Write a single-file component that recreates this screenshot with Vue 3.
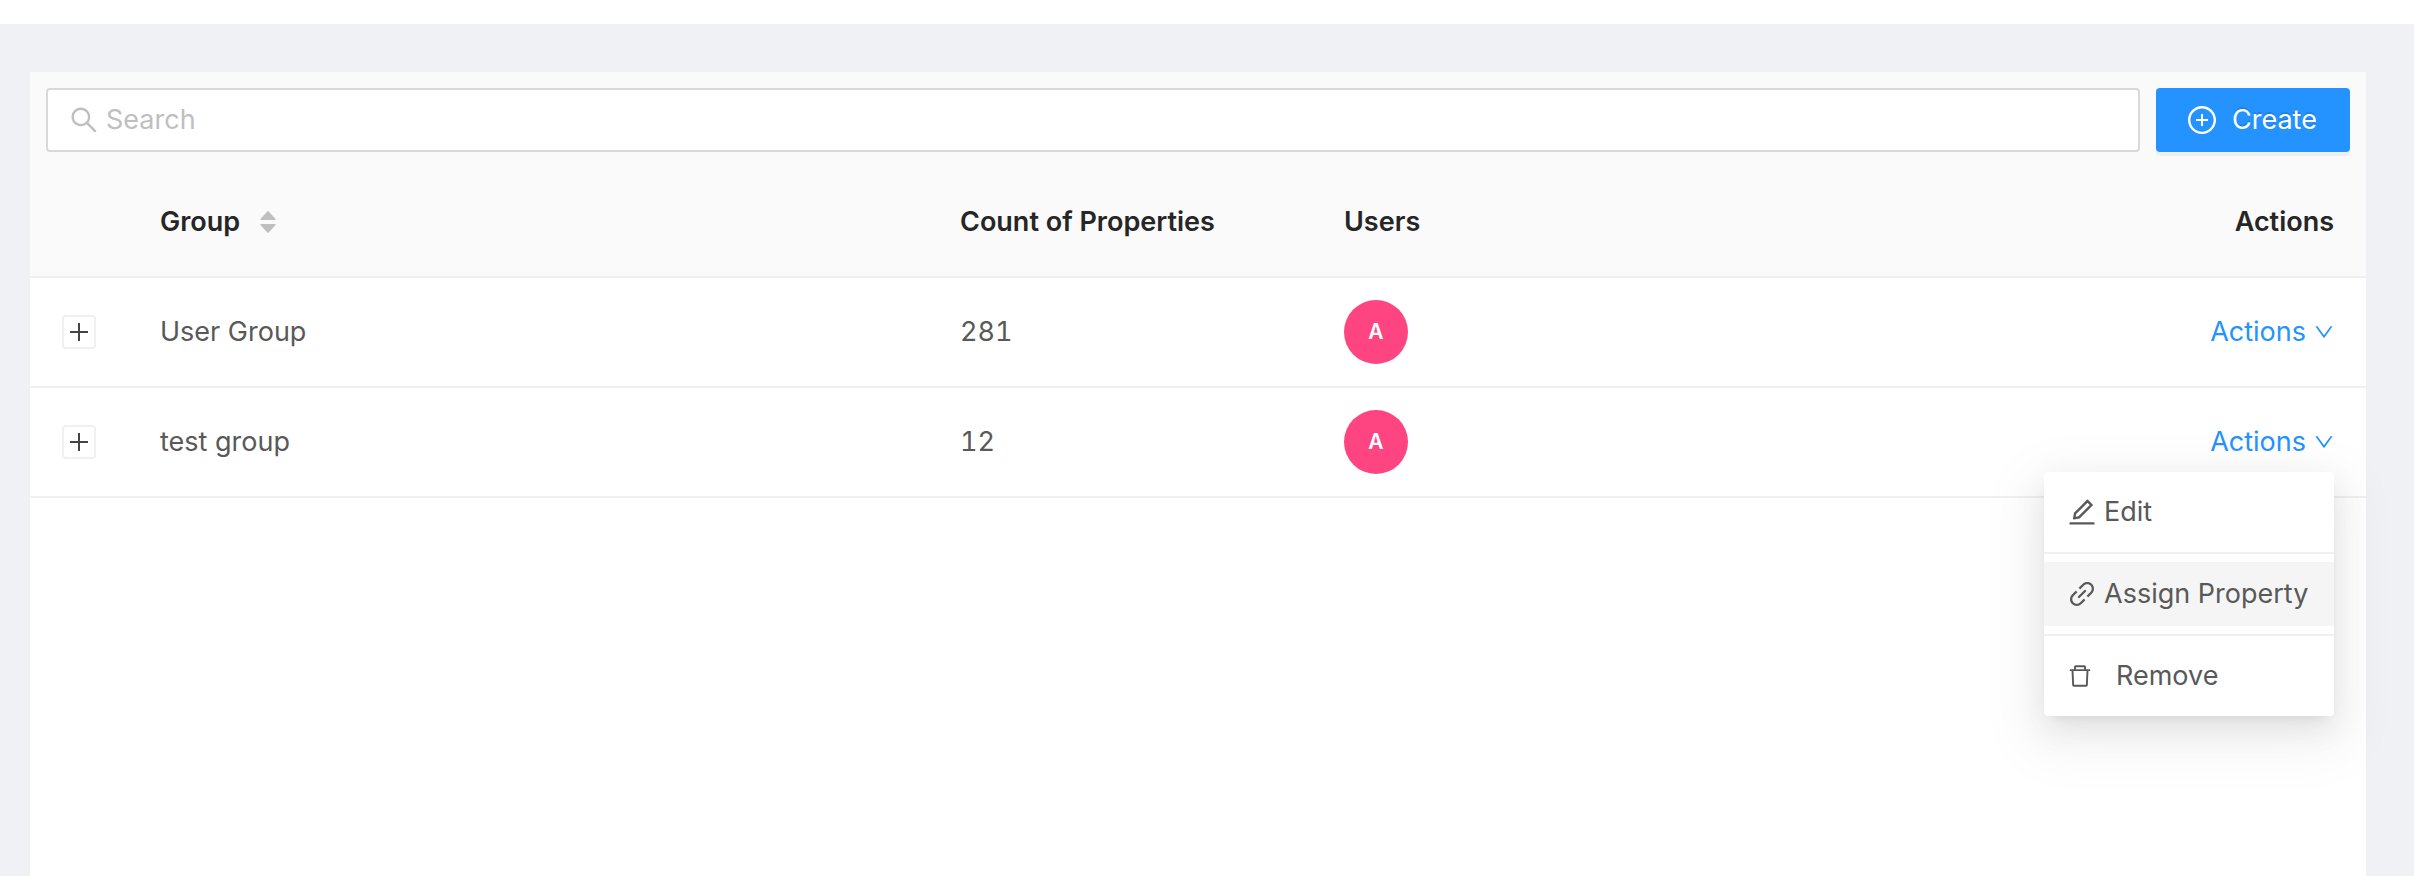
<script setup>
import { ref } from 'vue'

const query = ref('')
const openRow = ref(2)

const rows = [
  { id: 1, name: 'User Group', count: 281, user: 'A' },
  { id: 2, name: 'test group', count: 12, user: 'A' },
]

const icons = {
  search: 'M909.6 854.5L649.9 594.8C690.2 542.7 712 479 712 412c0-80.2-31.3-155.4-87.9-212.1-56.6-56.7-132-87.9-212.1-87.9s-155.5 31.3-212.1 87.9C143.2 256.5 112 331.8 112 412c0 80.1 31.3 155.5 87.9 212.1C256.5 680.8 331.8 712 412 712c67 0 130.6-21.8 182.7-62l259.7 259.6a8.2 8.2 0 0011.6 0l43.6-43.5a8.2 8.2 0 000-11.6zM570.4 570.4C528 612.7 471.8 636 412 636s-116-23.3-158.4-65.6C211.3 528 188 471.8 188 412s23.3-116.1 65.6-158.4C296 211.3 352.2 188 412 188s116.1 23.2 158.4 65.6S636 352.2 636 412s-23.3 116.1-65.6 158.4z',
  plusCircle: 'M696 480H544V328c0-4.4-3.6-8-8-8h-48c-4.4 0-8 3.6-8 8v152H328c-4.4 0-8 3.6-8 8v48c0 4.4 3.6 8 8 8h152v152c0 4.4 3.6 8 8 8h48c4.4 0 8-3.6 8-8V544h152c4.4 0 8-3.6 8-8v-48c0-4.4-3.6-8-8-8z M512 64C264.6 64 64 264.6 64 512s200.6 448 448 448 448-200.6 448-448S759.4 64 512 64zm0 820c-205.4 0-372-166.6-372-372s166.6-372 372-372 372 166.6 372 372-166.6 372-372 372z',
  down: 'M884 256h-75c-5.1 0-9.9 2.5-12.9 6.6L512 654.2 227.9 262.6c-3-4.1-7.8-6.6-12.9-6.6h-75c-6.5 0-10.3 7.4-6.5 12.7l352.6 486.1c12.8 17.6 39 17.6 51.7 0l352.6-486.1c3.9-5.3.1-12.7-6.4-12.7z',
  edit: 'M257.7 752c2 0 4-.2 6-.5L431.9 722c2-.4 3.9-1.3 5.3-2.8l423.9-423.9a9.96 9.96 0 000-14.1L694.9 114.9c-1.9-1.9-4.4-2.9-7.1-2.9s-5.2 1-7.1 2.9L256.8 538.8c-1.5 1.5-2.4 3.3-2.8 5.3l-29.5 168.2a33.5 33.5 0 009.4 29.8c6.6 6.4 14.9 9.9 23.8 9.9zm67.4-174.4L687.8 215l73.3 73.3-362.7 362.6-88.9 15.7 15.6-89zM880 836H144c-17.7 0-32 14.3-32 32v36c0 4.4 3.6 8 8 8h784c4.4 0 8-3.6 8-8v-36c0-17.7-14.3-32-32-32z',
  link: 'M574 665.4a8.03 8.03 0 00-11.3 0L446.5 781.6c-53.8 53.8-144.6 59.5-204 0-59.5-59.5-53.8-150.2 0-204l116.2-116.2c3.1-3.1 3.1-8.2 0-11.3l-39.8-39.8a8.03 8.03 0 00-11.3 0L191.4 526.5c-84.6 84.6-84.6 221.5 0 306s221.5 84.6 306 0l116.2-116.2c3.1-3.1 3.1-8.2 0-11.3L574 665.4zm258.6-474c-84.6-84.6-221.5-84.6-306 0L410.3 307.6a8.03 8.03 0 000 11.3l39.7 39.7c3.1 3.1 8.2 3.1 11.3 0l116.2-116.2c53.8-53.8 144.6-59.5 204 0 59.5 59.5 53.8 150.2 0 204L665.3 562.6a8.03 8.03 0 000 11.3l39.8 39.8c3.1 3.1 8.2 3.1 11.3 0l116.2-116.2c84.5-84.6 84.5-221.5 0-306.1zM610.1 372.3a8.03 8.03 0 00-11.3 0L372.3 598.7a8.03 8.03 0 000 11.3l39.6 39.6c3.1 3.1 8.2 3.1 11.3 0l226.4-226.4c3.1-3.1 3.1-8.2 0-11.3l-39.5-39.6z',
  trash: 'M360 184h-8c4.4 0 8-3.6 8-8v8h304v-8c0 4.4 3.6 8 8 8h-8v72h72v-80c0-35.3-28.7-64-64-64H352c-35.3 0-64 28.7-64 64v80h72v-72zm504 72H160c-17.7 0-32 14.3-32 32v32c0 4.4 3.6 8 8 8h60.4l24.7 523c1.6 34.1 29.8 61 63.9 61h454c34.2 0 62.3-26.8 63.9-61l24.7-523H888c4.4 0 8-3.6 8-8v-32c0-17.7-14.3-32-32-32zM731.3 840H292.7l-24.2-512h487l-24.2 512z',
}

const menu = [
  { label: 'Edit', icon: icons.edit },
  { label: 'Assign Property', icon: icons.link, active: true },
  { label: 'Remove', icon: icons.trash, small: true },
]

function toggle(id) {
  openRow.value = openRow.value === id ? 0 : id
}
</script>

<template>
  <div class="page">
    <main class="panel">
      <div class="toolbar">
        <label class="search">
          <svg class="icon" viewBox="64 64 896 896" aria-hidden="true"><path :d="icons.search" /></svg>
          <input v-model="query" type="text" placeholder="Search" aria-label="Search" />
        </label>
        <button class="create" type="button">
          <svg class="icon" viewBox="64 64 896 896" aria-hidden="true"><path :d="icons.plusCircle" /></svg>
          <span>Create</span>
        </button>
      </div>

      <table class="groups">
        <colgroup>
          <col class="col-expand" />
          <col class="col-group" />
          <col class="col-count" />
          <col />
          <col />
        </colgroup>
        <thead>
          <tr>
            <th></th>
            <th scope="col">
              <button class="sort" type="button">
                <span>Group</span>
                <svg class="sorter" viewBox="0 0 16 24" aria-hidden="true">
                  <path d="M7.3 1.4a1 1 0 0 1 1.4 0L15.6 9a.6.6 0 0 1-.4 1H.8a.6.6 0 0 1-.4-1z" />
                  <path d="M7.3 22.6a1 1 0 0 0 1.4 0L15.6 15a.6.6 0 0 0-.4-1H.8a.6.6 0 0 0-.4 1z" />
                </svg>
              </button>
            </th>
            <th scope="col">Count of Properties</th>
            <th scope="col">Users</th>
            <th scope="col" class="end">Actions</th>
          </tr>
        </thead>
        <tbody>
          <tr v-for="row in rows" :key="row.id">
            <td><button class="expand" type="button" :aria-label="'Expand ' + row.name"></button></td>
            <td>{{ row.name }}</td>
            <td class="number">{{ row.count }}</td>
            <td><span class="avatar">{{ row.user }}</span></td>
            <td class="end">
              <div class="dropdown">
                <button class="trigger" type="button" :aria-expanded="openRow === row.id" @click="toggle(row.id)">
                  <span>Actions</span>
                  <svg class="chevron" viewBox="64 64 896 896" aria-hidden="true"><path :d="icons.down" /></svg>
                </button>
                <ul v-if="openRow === row.id" class="menu">
                  <li v-for="item in menu" :key="item.label">
                    <button type="button" :class="{ active: item.active, small: item.small }">
                      <svg class="icon" viewBox="64 64 896 896" aria-hidden="true"><path :d="item.icon" /></svg>
                      <span>{{ item.label }}</span>
                    </button>
                  </li>
                </ul>
              </div>
            </td>
          </tr>
        </tbody>
      </table>
    </main>
  </div>
</template>

<style>
body {
  background: #f0f1f5;
}
</style>

<style scoped>
.page {
  box-sizing: border-box;
  display: flex;
  min-height: 100vh;
  padding: 48px 48px 0 30px;
  border-top: 24px solid #fff;
  background: #f0f1f5;
  color: #595959;
  font-family: Inter, "Liberation Sans", sans-serif;
  font-size: 27px;
  line-height: 44px;
}

.page * {
  box-sizing: border-box;
}

button,
input {
  margin: 0;
  padding: 0;
  border: 0;
  background: none;
  color: inherit;
  font: inherit;
}

button {
  cursor: pointer;
}

svg {
  flex: none;
  fill: currentColor;
}

.icon {
  width: 28px;
  height: 28px;
}

.panel {
  flex: 1;
  min-width: 0;
  background: #fff;
}

.toolbar {
  display: flex;
  gap: 16px;
  padding: 16px;
  background: #fafafa;
}

.search {
  display: flex;
  flex: 1;
  align-items: center;
  gap: 8px;
  height: 64px;
  padding: 0 22px;
  border: 2px solid #d9d9d9;
  border-radius: 4px;
  background: #fff;
  color: #bfbfbf;
}

.search input {
  flex: 1;
  min-width: 0;
  outline: none;
  color: #595959;
}

.search input::placeholder {
  color: #bfbfbf;
  opacity: 1;
}

.create {
  display: flex;
  align-items: center;
  gap: 16px;
  min-width: 194px;
  height: 64px;
  padding: 0 32px;
  border-radius: 4px;
  background: #2593ff;
  box-shadow: 0 4px 0 rgba(0, 0, 0, 0.043);
  color: #fff;
  text-shadow: 0 -2px 0 rgba(0, 0, 0, 0.12);
}

.groups {
  width: 100%;
  border-collapse: separate;
  border-spacing: 0;
  table-layout: fixed;
}

.col-expand {
  width: 98px;
}

.col-group {
  width: 800px;
}

.col-count {
  width: 384px;
}

th,
td {
  height: 110px;
  padding: 0 32px;
  border-bottom: 2px solid #f0f0f0;
  text-align: left;
  vertical-align: middle;
}

th {
  background: #fafafa;
  color: #262626;
  font-weight: 600;
}

.end {
  text-align: right;
}

.number {
  font-variant-numeric: tabular-nums;
}

.sort {
  display: flex;
  align-items: center;
  gap: 20px;
}

.sorter {
  width: 16px;
  height: 24px;
  color: #bfbfbf;
}

.expand {
  display: block;
  width: 34px;
  height: 34px;
  border: 2px solid #f0f0f0;
  border-radius: 4px;
  background:
    linear-gradient(#434343, #434343) center / 18px 2px no-repeat,
    linear-gradient(#434343, #434343) center / 2px 18px no-repeat,
    #fff;
}

.avatar {
  display: flex;
  align-items: center;
  justify-content: center;
  width: 64px;
  height: 64px;
  border-radius: 50%;
  background: #ff4581;
  color: #fff;
  font-size: 21px;
  font-weight: 600;
}

.dropdown {
  position: relative;
  display: flex;
  justify-content: flex-end;
}

.trigger {
  display: flex;
  align-items: center;
  gap: 8px;
  color: #2593ff;
}

.chevron {
  width: 20px;
  height: 20px;
}

.menu {
  position: absolute;
  z-index: 1;
  top: calc(100% + 8px);
  right: 0;
  min-width: 290px;
  margin: 0;
  padding: 8px 0;
  border-radius: 4px;
  background: #fff;
  box-shadow:
    0 6px 12px -8px rgba(0, 0, 0, 0.12),
    0 12px 32px rgba(0, 0, 0, 0.08),
    0 18px 56px 16px rgba(0, 0, 0, 0.05);
  list-style: none;
}

.menu li + li {
  margin-top: 8px;
  padding-top: 8px;
  border-top: 2px solid #f0f0f0;
}

.menu button {
  display: flex;
  align-items: center;
  gap: 8px;
  width: 100%;
  height: 64px;
  padding: 0 24px;
  white-space: nowrap;
}

.menu .active {
  background: #f5f5f5;
}

.menu .small {
  gap: 24px;
}

.menu .small .icon {
  width: 24px;
  height: 24px;
}
</style>
